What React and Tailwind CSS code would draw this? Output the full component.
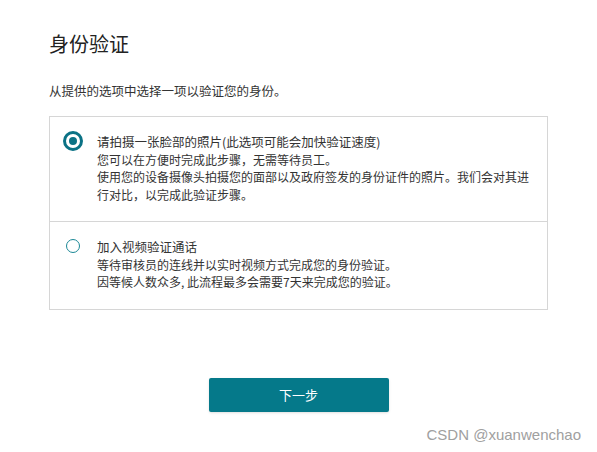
import React, { useState } from "react";

const OPTIONS = [
  {
    title: "请拍摄一张脸部的照片(此选项可能会加快验证速度)",
    lines: [
      "您可以在方便时完成此步骤，无需等待员工。",
      "使用您的设备摄像头拍摄您的面部以及政府签发的身份证件的照片。我们会对其进行对比，以完成此验证步骤。",
    ],
  },
  {
    title: "加入视频验证通话",
    lines: [
      "等待审核员的连线并以实时视频方式完成您的身份验证。",
      "因等候人数众多, 此流程最多会需要7天来完成您的验证。",
    ],
  },
];

function Radio({ on }) {
  if (on) {
    return (
      <span className="mt-[-2px] flex h-[20px] w-[20px] shrink-0 items-center justify-center rounded-full border-[3px] border-[#0b7285]">
        <span className="h-[8px] w-[8px] rounded-full bg-[#0b7285]" />
      </span>
    );
  }
  return (
    <span className="ml-[3px] mr-[3px] mt-[1px] h-[14px] w-[14px] shrink-0 rounded-full border-[1.5px] border-[#1b8896]" />
  );
}

export default function App() {
  const [sel, setSel] = useState(0);

  return (
    <div
      className="h-[452px] w-[597px] bg-white pl-[49px] pt-[30px] text-[#333]"
      style={{ fontFamily: '"Microsoft YaHei", "Noto Sans CJK SC", sans-serif' }}
    >
      <h1 className="text-[20px] leading-[28px] text-[#222]">身份验证</h1>
      <p className="mt-[24px] text-[12.5px] leading-[18px] text-[#333]">
        从提供的选项中选择一项以验证您的身份。
      </p>

      <div className="mt-[16px] w-[499px] border border-[#d6d6d6]">
        {OPTIONS.map((o, i) => (
          <div
            key={o.title}
            onClick={() => setSel(i)}
            className={`flex cursor-pointer gap-[14px] pl-[13px] pr-[16px] ${
              i === 0 ? "h-[104px] pt-[16px]" : "h-[88px] border-t border-[#d6d6d6] pt-[16px]"
            }`}
          >
            <Radio on={sel === i} />
            <div className="text-[12px] leading-[17.5px] text-[#333]">
              <div className="text-[12.5px]">{o.title}</div>
              {o.lines.map((l) => (
                <div key={l}>{l}</div>
              ))}
            </div>
          </div>
        ))}
      </div>

      <div className="mt-[68px] flex w-[499px] justify-center">
        <button className="h-[34px] w-[180px] rounded-[2px] bg-[#05798a] text-[13px] text-white shadow-sm">
          下一步
        </button>
      </div>

      <div className="mt-[12px] flex justify-end pr-[16px]">
        <span
          className="text-[15px] text-[#a0a0a0]"
          style={{ fontFamily: '"Liberation Sans", Arial, sans-serif' }}
        >
          CSDN @xuanwenchao
        </span>
      </div>
    </div>
  );
}
